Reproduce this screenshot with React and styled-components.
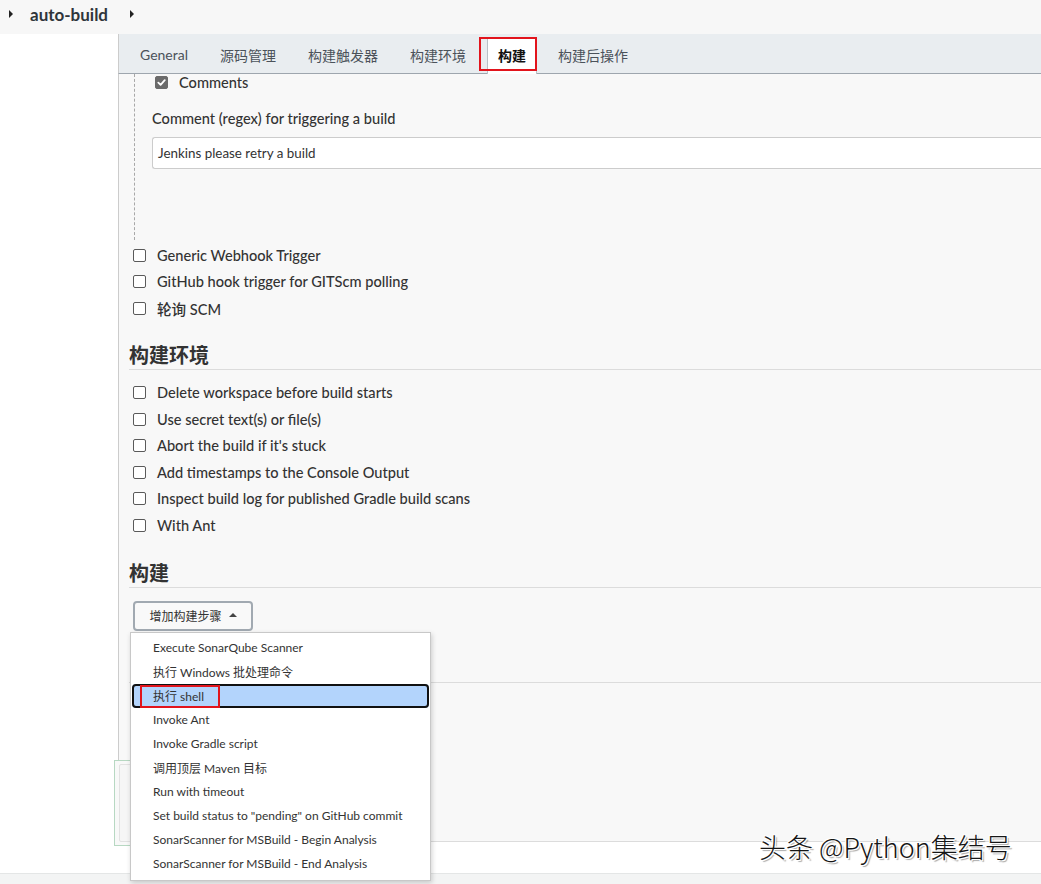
import React from 'react';
import styled, { createGlobalStyle } from 'styled-components';

const GlobalStyle = createGlobalStyle`
  html, body {
    margin: 0;
    padding: 0;
    background: #ffffff;
  }
  body {
    font-family: "Segoe UI", Lato, "Noto Sans", "Noto Sans CJK SC", sans-serif;
    color: #333;
  }
  * { box-sizing: border-box; }
`;

const Page = styled.div`
  position: relative;
  width: 1041px;
  height: 884px;
  overflow: hidden;
  display: flex;
  flex-direction: column;
`;

const TopBar = styled.div`
  height: 34px;
  background: #f7f7f7;
  display: flex;
  align-items: center;
  padding: 0 0 6px 9px;
`;

const Caret = styled.span`
  width: 0;
  height: 0;
  border-top: 4px solid transparent;
  border-bottom: 4px solid transparent;
  border-left: 4px solid #222;
`;

const JobName = styled.span`
  font-size: 17px;
  font-weight: 700;
  color: #2f353b;
  margin: 0 22px 0 17px;
`;

const Body = styled.div`
  flex: 1;
  display: flex;
  min-height: 0;
`;

const Sidebar = styled.div`
  width: 118px;
  background: #fff;
`;

const Main = styled.div`
  flex: 1;
  display: flex;
  flex-direction: column;
`;

const TabBar = styled.div`
  height: 40px;
  background: #e9edf0;
  border-left: 1px solid #ccc;
  border-bottom: 1px solid #9ea6ae;
  display: flex;
  align-items: flex-end;
  padding-left: 5px;
`;

const Tab = styled.div`
  position: relative;
  height: ${p => (p.$active ? 36 : 39)}px;
  margin: 0 5px -1px;
  padding: 0 10px;
  display: flex;
  align-items: center;
  font-size: 14px;
  color: ${p => (p.$active ? '#111' : '#4b525a')};
  font-weight: ${p => (p.$active ? 700 : 400)};
  background: ${p => (p.$active ? '#fff' : 'transparent')};
  border: 1px solid ${p => (p.$active ? '#b9c0c6' : 'transparent')};
  border-bottom: none;
  padding-bottom: ${p => (p.$active ? 3 : 1)}px;
`;

const RedMark = styled.span`
  position: absolute;
  border: 2px solid #e2141c;
  pointer-events: none;
`;

const Content = styled.div`
  flex: 1;
  background: #f8f8f8;
  border-left: 1px solid #ccc;
  border-bottom: 1px solid #dcdcdc;
  padding-left: 10px;
  display: flex;
  flex-direction: column;
`;

const Nested = styled.div`
  margin-left: 5px;
  height: 166px;
  border-left: 1px dashed #a8a8a8;
  padding-left: 17px;
`;

const CheckRow = styled.label`
  display: flex;
  align-items: center;
  gap: 11px;
  height: ${p => p.$h || 26.5}px;
  margin-left: ${p => p.$indent ?? 4}px;
  font-size: 14.6px;
  font-weight: 500;
  color: #333;
`;

const Box = styled.span`
  width: 13px;
  height: 13px;
  border: 1px solid ${p => (p.$checked ? '#6b6b6b' : '#5a5a5a')};
  border-radius: 2px;
  background: ${p => (p.$checked ? '#6b6b6b' : '#fff')};
  display: flex;
  align-items: center;
  justify-content: center;
  flex-shrink: 0;
`;

const FieldLabel = styled.div`
  margin-top: 18px;
  line-height: 20px;
  font-size: 14.6px;
  font-weight: 500;
  color: #333;
`;

const Input = styled.div`
  margin-top: 8px;
  height: 32px;
  background: #fff;
  border: 1px solid #ccc;
  border-right: none;
  border-radius: 3px 0 0 3px;
  display: flex;
  align-items: center;
  padding-left: 5px;
  font-size: 13.4px;
  color: #333;
`;

const List = styled.div`
  margin-top: ${p => p.$top || 0}px;
`;

const Heading = styled.h2`
  margin: ${p => p.$top}px 0 0 0;
  font-family: "Noto Sans CJK SC", sans-serif;
  font-size: 20px;
  line-height: 26px;
  font-weight: 700;
  color: #333;
  padding-bottom: 1px;
  border-bottom: 1px solid #dcdcdc;
`;

const Divider = styled.div`
  margin-top: 51px;
  border-bottom: 1px solid #dcdcdc;
`;

const StepArea = styled.div`
  position: relative;
  z-index: 5;
  margin-top: 13px;
  margin-left: 4px;
  align-self: flex-start;
`;

const AddButton = styled.button`
  width: 120px;
  height: 30px;
  border: 2px solid #a1a9b1;
  border-radius: 4px;
  background: #f9f9f9;
  font-family: "Noto Sans CJK SC", sans-serif;
  font-size: 12px;
  color: #333;
  display: flex;
  align-items: center;
  justify-content: center;
  gap: 7px;
  padding: 0;
`;

const UpCaret = styled.span`
  width: 0;
  height: 0;
  border-left: 4px solid transparent;
  border-right: 4px solid transparent;
  border-bottom: 4px solid #444;
  margin-top: -1px;
`;

const Menu = styled.div`
  position: absolute;
  top: 31px;
  left: -3px;
  width: 301px;
  background: #fff;
  border: 1px solid #c8c8c8;
  box-shadow: 1px 2px 5px rgba(0, 0, 0, 0.18);
  padding: 3px 0 4px;
`;

const MenuItem = styled.div`
  position: relative;
  height: 24px;
  display: flex;
  align-items: center;
  padding-left: 22px;
  font-size: 12px;
  color: #333;
  white-space: nowrap;
  background: ${p => (p.$selected ? '#b3d4fc' : 'transparent')};
  ${p => p.$selected && `
    outline: 2px solid #111;
    outline-offset: -2px;
    border-radius: 4px;
    margin: 0 1px;
    padding-left: 21px;
  `}
`;

const SaveBar = styled.div`
  position: relative;
  z-index: 1;
  margin-top: auto;
  margin-left: -15px;
  margin-bottom: -5px;
  width: 300px;
  height: 86px;
  border: 1px solid #b7d8c2;
  background: #f8f8f8;
  padding: 3px 4px;
`;

const SaveInner = styled.div`
  height: 100%;
  border: 1px solid #e2e2e2;
  border-radius: 2px;
  background: #f6f6f6;
`;

const Footer = styled.div`
  height: 42px;
  background: #fff;
  display: flex;
  flex-direction: column;
  justify-content: flex-end;
`;

const FooterStrip = styled.div`
  height: 11px;
  background: #f3f4f4;
  border-top: 1px solid #e4e6e6;
`;

const Watermark = styled.div`
  position: absolute;
  left: 759px;
  top: 829px;
  z-index: 10;
  font-family: "Noto Sans CJK SC", sans-serif;
  font-size: 27px;
  font-weight: 300;
  line-height: 36px;
  color: #161616;
  text-shadow: 1px 1px 0 #fff, -1px -1px 0 #fff, 1px -1px 0 #fff, -1px 1px 0 #fff, 2px 2px 1px rgba(0,0,0,0.35);
`;

const Check = () => (
  <svg width="9" height="9" viewBox="0 0 10 10">
    <path d="M1.5 5.2 L4 7.6 L8.6 2.4" fill="none" stroke="#fff" strokeWidth="2" strokeLinecap="round" strokeLinejoin="round" />
  </svg>
);

const triggers = ['Generic Webhook Trigger', 'GitHub hook trigger for GITScm polling', '轮询 SCM'];
const envOptions = [
  'Delete workspace before build starts',
  'Use secret text(s) or file(s)',
  "Abort the build if it's stuck",
  'Add timestamps to the Console Output',
  'Inspect build log for published Gradle build scans',
  'With Ant',
];
const steps = [
  'Execute SonarQube Scanner',
  '执行 Windows 批处理命令',
  '执行 shell',
  'Invoke Ant',
  'Invoke Gradle script',
  '调用顶层 Maven 目标',
  'Run with timeout',
  'Set build status to "pending" on GitHub commit',
  'SonarScanner for MSBuild - Begin Analysis',
  'SonarScanner for MSBuild - End Analysis',
];
const tabs = ['General', '源码管理', '构建触发器', '构建环境', '构建', '构建后操作'];

export default function App() {
  return (
    <Page>
      <GlobalStyle />
      <TopBar>
        <Caret />
        <JobName>auto-build</JobName>
        <Caret />
      </TopBar>
      <Body>
        <Sidebar />
        <Main>
          <TabBar>
            {tabs.map(t => (
              <Tab key={t} $active={t === '构建'}>
                {t}
                {t === '构建' && <RedMark style={{ top: -2, left: -9, right: -1, bottom: 3 }} />}
              </Tab>
            ))}
          </TabBar>
          <Content>
            <Nested>
              <CheckRow $h={17} $indent={3}>
                <Box $checked><Check /></Box>
                Comments
              </CheckRow>
              <FieldLabel>Comment (regex) for triggering a build</FieldLabel>
              <Input>Jenkins please retry a build</Input>
            </Nested>
            <List $top={2}>
              {triggers.map(t => (
                <CheckRow key={t}><Box />{t}</CheckRow>
              ))}
            </List>
            <Heading $top={20}>构建环境</Heading>
            <List $top={10}>
              {envOptions.map(t => (
                <CheckRow key={t}><Box />{t}</CheckRow>
              ))}
            </List>
            <Heading $top={21}>构建</Heading>
            <StepArea>
              <AddButton>增加构建步骤<UpCaret /></AddButton>
              <Menu>
                {steps.map(s => (
                  <MenuItem key={s} $selected={s === '执行 shell'}>
                    {s}
                    {s === '执行 shell' && <RedMark style={{ top: 1, left: 8, width: 80, height: 23 }} />}
                  </MenuItem>
                ))}
              </Menu>
            </StepArea>
            <Divider />
            <SaveBar><SaveInner /></SaveBar>
          </Content>
        </Main>
      </Body>
      <Footer><FooterStrip /></Footer>
      <Watermark>头条 @Python集结号</Watermark>
    </Page>
  );
}
